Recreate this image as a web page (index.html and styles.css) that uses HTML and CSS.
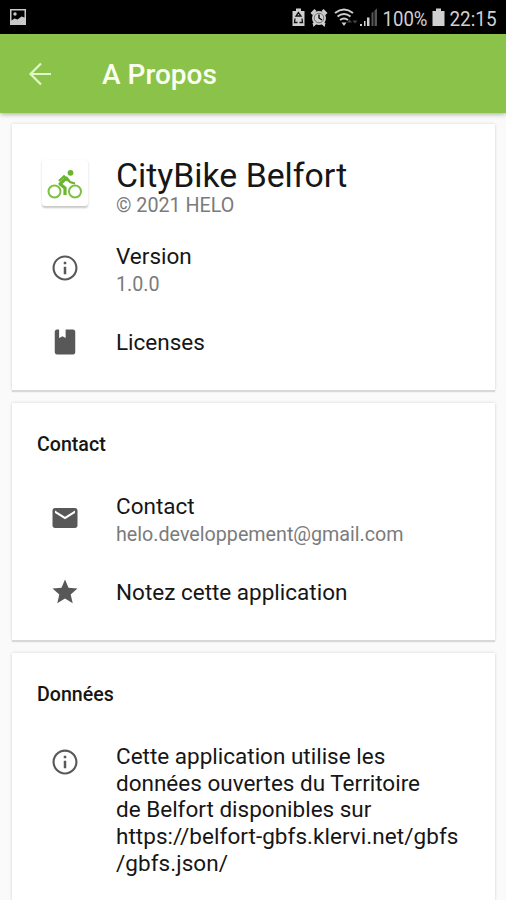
FILE: index.html
```html
<!DOCTYPE html>
<html lang="fr">
<head>
<meta charset="utf-8">
<title>A Propos</title>
<link rel="stylesheet" href="styles.css">
</head>
<body>
<div class="status">
  <svg class="photo" viewBox="0 0 18 16"><path fill-rule="evenodd" d="M1 0h16v16H1zM2.500 1.500v10l3-2 3 1 4-3 3 1V1.500z"/><circle cx="6" cy="5" r="1.700"/></svg>
  <svg class="indicators" viewBox="0 0 216 34">
    <path d="M6 8.500h5V11h3.500v15h-12V11H6z"/>
    <path d="M8.500 12.500l-2.500 3.500h5zM5 18.500l-.5 4h3M12 18.500l.5 4h-3" fill="none" stroke="#111" stroke-width="1.300"/>
    <g transform="translate(20.500 9)"><path d="M0 4l4-4 2 2-4 4zM17 4l-4-4-2 2 4 4zM2 14l2-1 2 2-3 3zM15 14l-2-1-2 2 3 3z"/><circle cx="8.500" cy="9" r="7"/><circle cx="8.500" cy="9" r="4.800" fill="none" stroke="#555" stroke-width=".8"/><path d="M8.500 5.500V9l3 2" stroke="#000" fill="none" stroke-width="1.400"/></g>
    <g fill="none" stroke="#d0d0d0" stroke-width="1.900"><path d="M45 13q9-7 18 0M47.500 16.500q6.500-5 13 0M50 20q4-3 8 0"/></g>
    <path d="M51.500 22.500h5L54 26z"/>
    <path d="M57 22.500l2.500-3 2.500 3zM62.500 20.500h5l-2.500 3z" fill="#444"/>
    <path d="M70 24h2v2h-2zM74 21h1.500v5H74zM77 17.500h2.500V26H77z"/>
    <path d="M81.500 13l2-1.500V26h-2zM84.500 10.500L87 8.500V26h-2.500z" fill="#555"/>
    <text x="92.500" y="25.500" textLength="45" lengthAdjust="spacingAndGlyphs">100%</text>
    <path d="M146 8.500h5V11h3.500v15h-12V11h3.500z"/>
    <text x="159.500" y="25.500" textLength="47" lengthAdjust="spacingAndGlyphs">22:15</text>
  </svg>
</div>
<header class="toolbar">
  <svg class="back" viewBox="0 0 24 24"><path d="M23 12H2M13 1.500L2.500 12 13 22.500"/></svg>
  <h1>A Propos</h1>
</header>
<main>
  <section class="card about">
    <div class="row app">
      <div class="logo"><svg viewBox="0 0 36 32"><g fill="none" stroke="#7cc142" stroke-width="2"><circle cx="7.500" cy="22.500" r="6"/><circle cx="28" cy="22.500" r="6"/></g><circle cx="23.500" cy="3.800" r="2.900" fill="#69b52d"/><path d="M20 8.500l-7 6.500 5 4v7" fill="none" stroke="#69b52d" stroke-width="3.200" stroke-linejoin="round"/><path d="M19 8l4 5 5 1.500M12 12l5-4.500 4 4.500" fill="none" stroke="#69b52d" stroke-width="2.300"/></svg></div>
      <div class="text"><div class="name">CityBike Belfort</div><div class="sub copy">© 2021 HELO</div></div>
    </div>
    <div class="row version">
      <svg class="icon" viewBox="0 0 24 24"><path d="M11 7h2v2h-2zm0 4h2v6h-2zm1-9C6.480 2 2 6.480 2 12s4.480 10 10 10 10-4.480 10-10S17.520 2 12 2zm0 18.300c-4.600 0-8.300-3.700-8.300-8.300s3.700-8.300 8.300-8.300 8.300 3.700 8.300 8.300-3.700 8.300-8.300 8.300z"/></svg>
      <div class="text"><div>Version</div><div class="sub">1.0.0</div></div>
    </div>
    <div class="row">
      <svg class="icon" viewBox="0 0 24 24"><path d="M18.500 2H12.500v6.800L10 7.300 7.300 8.800V2H5.500C4.600 2 3.800 2.900 3.800 4v16c0 1.100.8 2 1.700 2h13c1 0 1.700-.9 1.700-2V4c0-1.100-.7-2-1.700-2z"/></svg>
      <div class="text">Licenses</div>
    </div>
  </section>
  <section class="card contact">
    <h2>Contact</h2>
    <div class="row mail">
      <svg class="icon" viewBox="0 0 24 24"><path d="M20 4H4c-1.100 0-1.990.9-1.990 2L2 18c0 1.100.9 2 2 2h16c1.100 0 2-.9 2-2V6c0-1.100-.9-2-2-2zm0 4l-8 5-8-5V6l8 5 8-5v2z"/></svg>
      <div class="text"><div>Contact</div><div class="sub">helo.developpement@gmail.com</div></div>
    </div>
    <div class="row">
      <svg class="icon" viewBox="0 0 24 24"><path d="M12 17.270L18.180 21l-1.640-7.030L22 9.240l-7.190-.61L12 2 9.190 8.630 2 9.240l5.460 4.730L5.820 21z"/></svg>
      <div class="text">Notez cette application</div>
    </div>
  </section>
  <section class="card data">
    <h2>Données</h2>
    <div class="row info">
      <svg class="icon" viewBox="0 0 24 24"><path d="M11 7h2v2h-2zm0 4h2v6h-2zm1-9C6.480 2 2 6.480 2 12s4.480 10 10 10 10-4.480 10-10S17.520 2 12 2zm0 18.300c-4.600 0-8.300-3.700-8.300-8.300s3.700-8.300 8.300-8.300 8.300 3.700 8.300 8.300-3.700 8.300-8.300 8.300z"/></svg>
      <div class="text">Cette application utilise les<br>données ouvertes du Territoire<br>de Belfort disponibles sur<br><span class="link">https://belfort-gbfs.klervi.net/gbfs<br>/gbfs.json/</span></div>
    </div>
  </section>
</main>
</body>
</html>
```
FILE: styles.css
```css
* { box-sizing: border-box; }
body { margin: 0; width: 506px; height: 900px; overflow: hidden; display: flex; flex-direction: column; background: #fafafa; color: #161616; font-family: Roboto, sans-serif; }
.status { flex: none; height: 34px; background: #000; display: flex; align-items: center; justify-content: space-between; padding-left: 9px; }
.photo { width: 18px; height: 16px; fill: #c8c8c8; }
.indicators { width: 216px; height: 34px; fill: #d0d0d0; font-size: 20.500px; }
.toolbar { flex: none; height: 79px; background: #8bc34a; display: flex; align-items: center; padding-left: 28px; box-shadow: 0 1px 5px rgba(0,0,0,.35); }
.back { width: 24px; height: 24px; fill: none; stroke: #e2f7c8; stroke-width: 2.200; }
h1 { margin: 3px 0 0 50px; font-size: 28px; line-height: 34px; font-weight: 500; color: #fbfff2; }
main { flex: 1; min-height: 0; padding: 11px 10px 0 12px; display: flex; flex-direction: column; gap: 13px; }
.card { flex: none; background: #fff; width: 483px; box-shadow: 0 2px 1px #d8d8d8, 0 0 3px rgba(0,0,0,.15); }
.about { height: 266px; padding-top: 33px; }
.contact { height: 237px; }
.data { flex: 1; min-height: 0; }
.row { display: flex; align-items: flex-start; font-size: 22.500px; line-height: 27px; }
.icon { flex: none; width: 30px; height: 30px; margin: -2px 36px 0 38px; fill: #585858; }
.sub { font-size: 19.700px; line-height: 30px; color: #7b7b7b; }
.logo { flex: none; width: 46px; height: 46px; margin: 3px 28px 0 30px; border-radius: 3px; background: #fff; box-shadow: 0 1.500px 2px rgba(0,0,0,.22); display: flex; justify-content: center; padding-top: 9px; }
.logo svg { width: 36px; height: 32px; }
.name { font-size: 33.800px; line-height: 38px; }
.copy { line-height: 22px; }
.version { margin-top: 26px; }
.version .icon, .mail .icon { margin-top: 10px; }
.version + .row, .mail + .row { margin-top: 29px; }
h2 { margin: 0; padding: 29px 0 0 25px; font-size: 19.600px; line-height: 26px; font-weight: 500; }
.mail, .info { margin-top: 35px; }
.info { line-height: 26.700px; }
.info .icon { margin-top: 4px; }
.link { letter-spacing: .05px; }
```
